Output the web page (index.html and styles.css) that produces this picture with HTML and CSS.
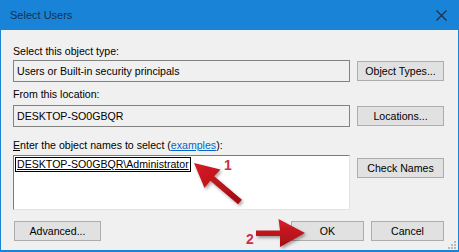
FILE: index.html
```html
<!DOCTYPE html>
<html>
<head>
<meta charset="utf-8">
<link rel="stylesheet" href="styles.css">
</head>
<body>
<div class="dialog">
  <div class="titlebar">
    <span class="title">Select Users</span>
    <svg class="close" width="11" height="11" viewBox="0 0 11 11"><path d="M0.5 0.5 L10.5 10.5 M10.5 0.5 L0.5 10.5" stroke="#16324f" stroke-width="1.1" fill="none"/></svg>
  </div>
  <div class="content">
    <div class="label l1">Select this object type:</div>
    <div class="row">
      <div class="field">Users or Built-in security principals</div>
      <div class="btn">Object Types...</div>
    </div>
    <div class="label l2">From this location:</div>
    <div class="row">
      <div class="field">DESKTOP-SO0GBQR</div>
      <div class="btn">Locations...</div>
    </div>
    <div class="label l3"><span class="ak">E</span>nter the object names to select (<span class="link">examples</span>):</div>
    <div class="row top">
      <div class="area"><span class="resolved">DESKTOP-SO0GBQR\Administrator</span></div>
      <div class="btn check">Check Names</div>
    </div>
    <div class="footer">
      <div class="btn adv">Advanced...</div>
      <div class="btn small">OK</div>
      <div class="btn small">Cancel</div>
    </div>
  </div>
  <svg class="overlay" width="459" height="252" viewBox="0 0 459 252">
    <defs>
      <linearGradient id="g1" x1="0" y1="0" x2="1" y2="1">
        <stop offset="0" stop-color="#d61c24"/>
        <stop offset="1" stop-color="#a00d14"/>
      </linearGradient>
      <linearGradient id="g2" x1="0" y1="0" x2="0" y2="1">
        <stop offset="0" stop-color="#d81e26"/>
        <stop offset="1" stop-color="#a20e15"/>
      </linearGradient>
      <filter id="sh" x="-30%" y="-30%" width="160%" height="160%">
        <feDropShadow dx="1.5" dy="2" stdDeviation="1.5" flood-color="#000" flood-opacity="0.35"/>
      </filter>
    </defs>
    <polygon filter="url(#sh)" fill="url(#g1)" points="194,163 220.5,169.5 214.2,176.2 241.9,199.7 238.1,204.3 210.4,180.8 204.5,188"/>
    <polygon filter="url(#sh)" fill="url(#g2)" points="256,230.5 280,230.5 278.5,219 305,233 280,247 280,236 256,236"/>
    <g class="grip" fill="#b9b9b9">
      <rect x="454" y="241" width="2" height="2"/>
      <rect x="451" y="244" width="2" height="2"/>
      <rect x="454" y="244" width="2" height="2"/>
      <rect x="448" y="247" width="2" height="2"/>
      <rect x="451" y="247" width="2" height="2"/>
      <rect x="454" y="247" width="2" height="2"/>
    </g>
  </svg>
  <span class="num n1">1</span>
  <span class="num n2">2</span>
</div>
</body>
</html>
```
FILE: styles.css
```css
body {
  margin: 0;
  font-family: "Liberation Sans", Arial, sans-serif;
  font-size: 10.6px;
  color: #000;
}

.dialog {
  position: relative;
  width: 459px;
  height: 252px;
  box-sizing: border-box;
  border: 1px solid #1883d7;
  border-top: 0;
  border-bottom-width: 2px;
  background: #f0f0f0;
  overflow: hidden;
}

.titlebar {
  height: 30px;
  background: #1883d7;
  display: flex;
  align-items: center;
  justify-content: space-between;
  padding: 0 11px 0 9px;
}

.title {
  font-size: 11px;
  color: #16324f;
}

.close {
  display: block;
}

.content {
  padding: 14px 14px 0 12px;
}

.label {
  height: 14px;
  line-height: 14px;
  white-space: nowrap;
}

.l1 { margin-bottom: 2px; }
.l2 { margin: 5px 0 4px; }
.l3 { margin: 11px 0 3px; }

.ak { text-decoration: underline; }

.link {
  color: #0066cc;
  text-decoration: underline;
}

.row {
  display: flex;
  gap: 7px;
  align-items: center;
}

.row.top {
  align-items: flex-start;
}

.field {
  flex: 1;
  height: 22px;
  box-sizing: border-box;
  border: 1px solid #838383;
  padding-left: 3px;
  line-height: 20px;
  white-space: nowrap;
}

.area {
  flex: 1;
  height: 55px;
  box-sizing: border-box;
  background: #fff;
  border: 1px solid #e3e3e3;
  border-top-color: #7a7a7a;
  border-left-color: #7a7a7a;
  padding: 1px 0 0 1px;
}

.resolved {
  display: inline-block;
  border: 1px solid #000;
  padding: 0 1px;
  line-height: 13px;
  text-decoration: underline;
  white-space: nowrap;
}

.btn {
  width: 87px;
  height: 20px;
  box-sizing: border-box;
  border: 1px solid #adadad;
  background: #e1e1e1;
  text-align: center;
  line-height: 18px;
  white-space: nowrap;
  flex: none;
}

.btn.check {
  margin-top: 3px;
}

.footer {
  display: flex;
  gap: 7px;
  margin-top: 11px;
}

.btn.adv {
  margin-left: 1px;
  margin-right: auto;
}

.btn.small {
  width: 73px;
}

.overlay {
  position: absolute;
  top: 0;
  left: -1px;
}

.num {
  position: absolute;
  font-size: 14px;
  line-height: 14px;
  font-weight: bold;
  color: #d22d45;
}

.n1 { left: 223px; top: 158px; }
.n2 { left: 245px; top: 232px; }
```
